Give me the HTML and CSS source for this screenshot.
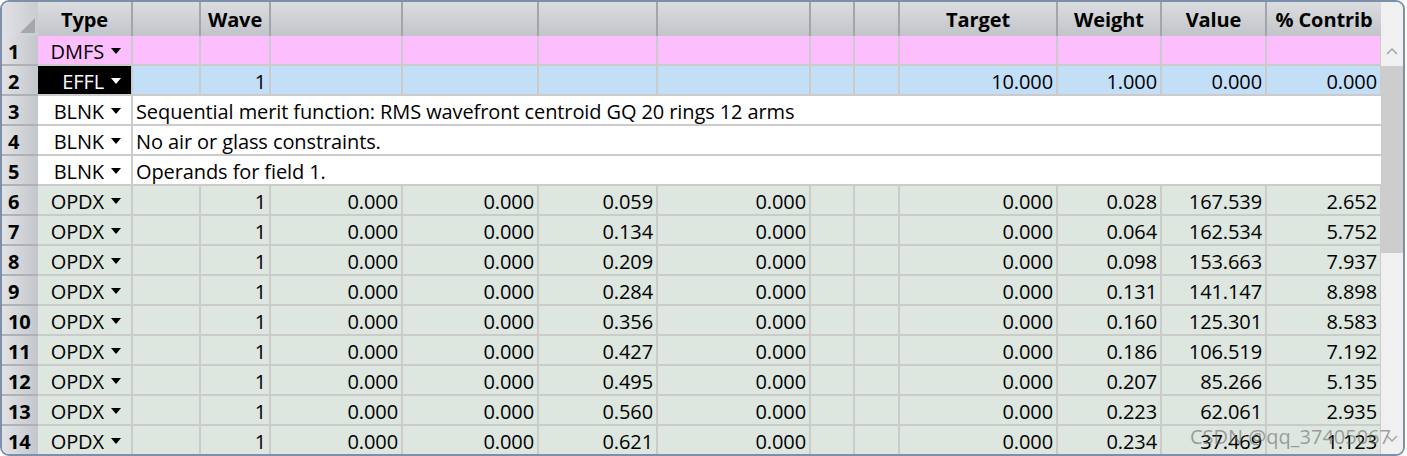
FILE: index.html
```html
<!DOCTYPE html>
<html lang="en">
<head>
    <meta charset="UTF-8">
    <title>Merit Function Editor</title>
    <link rel="stylesheet" href="styles.css">
</head>
<body>
    <div class="window">
        <div class="sheet">
            <div class="row head">
                <div class="corner"></div>
                <div class="hc">Type</div>
                <div class="hc"></div>
                <div class="hc">Wave</div>
                <div class="hc"></div>
                <div class="hc"></div>
                <div class="hc"></div>
                <div class="hc"></div>
                <div class="hc"></div>
                <div class="hc"></div>
                <div class="hc">Target</div>
                <div class="hc">Weight</div>
                <div class="hc">Value</div>
                <div class="hc">% Contrib</div>
            </div>

            <div class="row pink">
                <div class="num">1</div>
                <div class="c type"><span class="op">DMFS</span></div>
                <div class="c"></div><div class="c"></div><div class="c"></div><div class="c"></div><div class="c"></div>
                <div class="c"></div><div class="c"></div><div class="c"></div><div class="c"></div><div class="c"></div>
                <div class="c"></div><div class="c last"></div>
            </div>

            <div class="row blue">
                <div class="num">2</div>
                <div class="c type sel"><span class="op">EFFL</span></div>
                <div class="c"></div><div class="c">1</div><div class="c"></div><div class="c"></div><div class="c"></div>
                <div class="c"></div><div class="c"></div><div class="c"></div>
                <div class="c">10.000</div><div class="c">1.000</div><div class="c">0.000</div><div class="c last">0.000</div>
            </div>

            <div class="row white">
                <div class="num">3</div>
                <div class="c type"><span class="op">BLNK</span></div>
                <div class="comment">Sequential merit function: RMS wavefront centroid GQ 20 rings 12 arms</div>
            </div>
            <div class="row white">
                <div class="num">4</div>
                <div class="c type"><span class="op">BLNK</span></div>
                <div class="comment">No air or glass constraints.</div>
            </div>
            <div class="row white">
                <div class="num">5</div>
                <div class="c type"><span class="op">BLNK</span></div>
                <div class="comment">Operands for field 1.</div>
            </div>

            <div class="row green">
                <div class="num">6</div><div class="c type"><span class="op">OPDX</span></div>
                <div class="c"></div><div class="c">1</div><div class="c">0.000</div><div class="c">0.000</div><div class="c">0.059</div><div class="c">0.000</div><div class="c"></div><div class="c"></div>
                <div class="c">0.000</div><div class="c">0.028</div><div class="c">167.539</div><div class="c last">2.652</div>
            </div>
            <div class="row green">
                <div class="num">7</div><div class="c type"><span class="op">OPDX</span></div>
                <div class="c"></div><div class="c">1</div><div class="c">0.000</div><div class="c">0.000</div><div class="c">0.134</div><div class="c">0.000</div><div class="c"></div><div class="c"></div>
                <div class="c">0.000</div><div class="c">0.064</div><div class="c">162.534</div><div class="c last">5.752</div>
            </div>
            <div class="row green">
                <div class="num">8</div><div class="c type"><span class="op">OPDX</span></div>
                <div class="c"></div><div class="c">1</div><div class="c">0.000</div><div class="c">0.000</div><div class="c">0.209</div><div class="c">0.000</div><div class="c"></div><div class="c"></div>
                <div class="c">0.000</div><div class="c">0.098</div><div class="c">153.663</div><div class="c last">7.937</div>
            </div>
            <div class="row green">
                <div class="num">9</div><div class="c type"><span class="op">OPDX</span></div>
                <div class="c"></div><div class="c">1</div><div class="c">0.000</div><div class="c">0.000</div><div class="c">0.284</div><div class="c">0.000</div><div class="c"></div><div class="c"></div>
                <div class="c">0.000</div><div class="c">0.131</div><div class="c">141.147</div><div class="c last">8.898</div>
            </div>
            <div class="row green">
                <div class="num">10</div><div class="c type"><span class="op">OPDX</span></div>
                <div class="c"></div><div class="c">1</div><div class="c">0.000</div><div class="c">0.000</div><div class="c">0.356</div><div class="c">0.000</div><div class="c"></div><div class="c"></div>
                <div class="c">0.000</div><div class="c">0.160</div><div class="c">125.301</div><div class="c last">8.583</div>
            </div>
            <div class="row green">
                <div class="num">11</div><div class="c type"><span class="op">OPDX</span></div>
                <div class="c"></div><div class="c">1</div><div class="c">0.000</div><div class="c">0.000</div><div class="c">0.427</div><div class="c">0.000</div><div class="c"></div><div class="c"></div>
                <div class="c">0.000</div><div class="c">0.186</div><div class="c">106.519</div><div class="c last">7.192</div>
            </div>
            <div class="row green">
                <div class="num">12</div><div class="c type"><span class="op">OPDX</span></div>
                <div class="c"></div><div class="c">1</div><div class="c">0.000</div><div class="c">0.000</div><div class="c">0.495</div><div class="c">0.000</div><div class="c"></div><div class="c"></div>
                <div class="c">0.000</div><div class="c">0.207</div><div class="c">85.266</div><div class="c last">5.135</div>
            </div>
            <div class="row green">
                <div class="num">13</div><div class="c type"><span class="op">OPDX</span></div>
                <div class="c"></div><div class="c">1</div><div class="c">0.000</div><div class="c">0.000</div><div class="c">0.560</div><div class="c">0.000</div><div class="c"></div><div class="c"></div>
                <div class="c">0.000</div><div class="c">0.223</div><div class="c">62.061</div><div class="c last">2.935</div>
            </div>
            <div class="row green">
                <div class="num">14</div><div class="c type"><span class="op">OPDX</span></div>
                <div class="c"></div><div class="c">1</div><div class="c">0.000</div><div class="c">0.000</div><div class="c">0.621</div><div class="c">0.000</div><div class="c"></div><div class="c"></div>
                <div class="c">0.000</div><div class="c">0.234</div><div class="c">37.469</div><div class="c last">1.123</div>
            </div>
        </div>

        <div class="scrollbar">
            <div class="sb-top"></div>
            <div class="sb-btn">
                <svg width="12" height="8" viewBox="0 0 12 8"><polyline points="1,7 6,2 11,7" fill="none" stroke="#a6a6a6" stroke-width="1.5"/></svg>
            </div>
            <div class="sb-thumb"></div>
            <div class="sb-track"></div>
            <div class="sb-btn">
                <svg width="12" height="8" viewBox="0 0 12 8"><polyline points="1,1 6,6 11,1" fill="none" stroke="#a6a6a6" stroke-width="1.5"/></svg>
            </div>
        </div>

        <div class="watermark">CSDN @qq_37405067</div>
    </div>
</body>
</html>
```

FILE: styles.css
```css
* {
    margin: 0;
    padding: 0;
    box-sizing: border-box;
}

body {
    background: #ffffff;
    font-family: 'Open Sans', 'Noto Sans', sans-serif;
    font-size: 20px;
    letter-spacing: -0.1px;
    color: #000;
}

.window {
    position: relative;
    width: 1405px;
    height: 456px;
    border: 2px solid #7c91a9;
    border-radius: 9px;
    overflow: hidden;
    display: flex;
    background: #f0f0f0;
}

.sheet {
    width: 1379px;
    display: flex;
    flex-direction: column;
}

.row {
    display: grid;
    grid-template-columns: 36px 95px 68px 70px 132px 136px 119px 153px 44px 45px 158px 104px 105px 114px;
    height: 30px;
}

/* header */
.row.head {
    height: 34px;
    background: linear-gradient(#dcdde0, #c1c4c9);
}

.corner {
    position: relative;
    background: linear-gradient(to right, #e0e1e4, #c9ccd0);
}

.corner::after {
    content: "";
    position: absolute;
    right: 3px;
    bottom: 3px;
    width: 0;
    height: 0;
    border-left: 15px solid transparent;
    border-bottom: 15px solid #a3a6ab;
}

.hc {
    border-right: 2px solid #a2a5a9;
    font-weight: bold;
    text-align: center;
    line-height: 32px;
    padding-top: 2px;
    white-space: nowrap;
}

.hc:last-child {
    border-right: none;
}

/* row numbers */
.num {
    background: linear-gradient(to right, #e1e2e5, #c3c6cb);
    border-bottom: 2px solid #aeb1b6;
    font-weight: bold;
    line-height: 24px;
    padding-top: 4px;
    padding-left: 6px;
}

.c {
    border-right: 2px solid #cbcbcb;
    border-bottom: 2px solid #cbcbcb;
    text-align: right;
    padding-right: 3px;
    line-height: 24px;
    padding-top: 4px;
    white-space: nowrap;
}

.c.last {
    border-right: 1px solid #cbcbcb;
}

.type {
    padding-right: 10px;
}

.op::after {
    content: "";
    display: inline-block;
    margin-left: 7px;
    vertical-align: 5px;
    border-left: 5px solid transparent;
    border-right: 5px solid transparent;
    border-top: 6px solid #000;
}

.pink .c { background: #fdbefd; }
.blue .c { background: #c3dff7; }
.white .c, .white .comment { background: #ffffff; }
.green .c { background: #dde6df; }

.type.sel {
    background: #000 !important;
    color: #fff;
}

.type.sel .op::after {
    border-top-color: #fff;
}

.comment {
    grid-column: 3 / 15;
    border-bottom: 2px solid #cbcbcb;
    line-height: 24px;
    padding-top: 4px;
    padding-left: 3px;
    white-space: nowrap;
}

/* scrollbar */
.scrollbar {
    width: 22px;
    display: flex;
    flex-direction: column;
    background: #f0f0f0;
}

.sb-top {
    height: 34px;
}

.sb-btn {
    height: 30px;
    display: flex;
    align-items: center;
    justify-content: center;
}

.sb-thumb {
    height: 187px;
    background: #cdcdcd;
}

.sb-track {
    flex: 1;
}

.watermark {
    position: absolute;
    right: 12px;
    bottom: 4px;
    font-size: 20px;
    letter-spacing: 0;
    color: rgba(105, 105, 105, 0.6);
    white-space: nowrap;
}
```
